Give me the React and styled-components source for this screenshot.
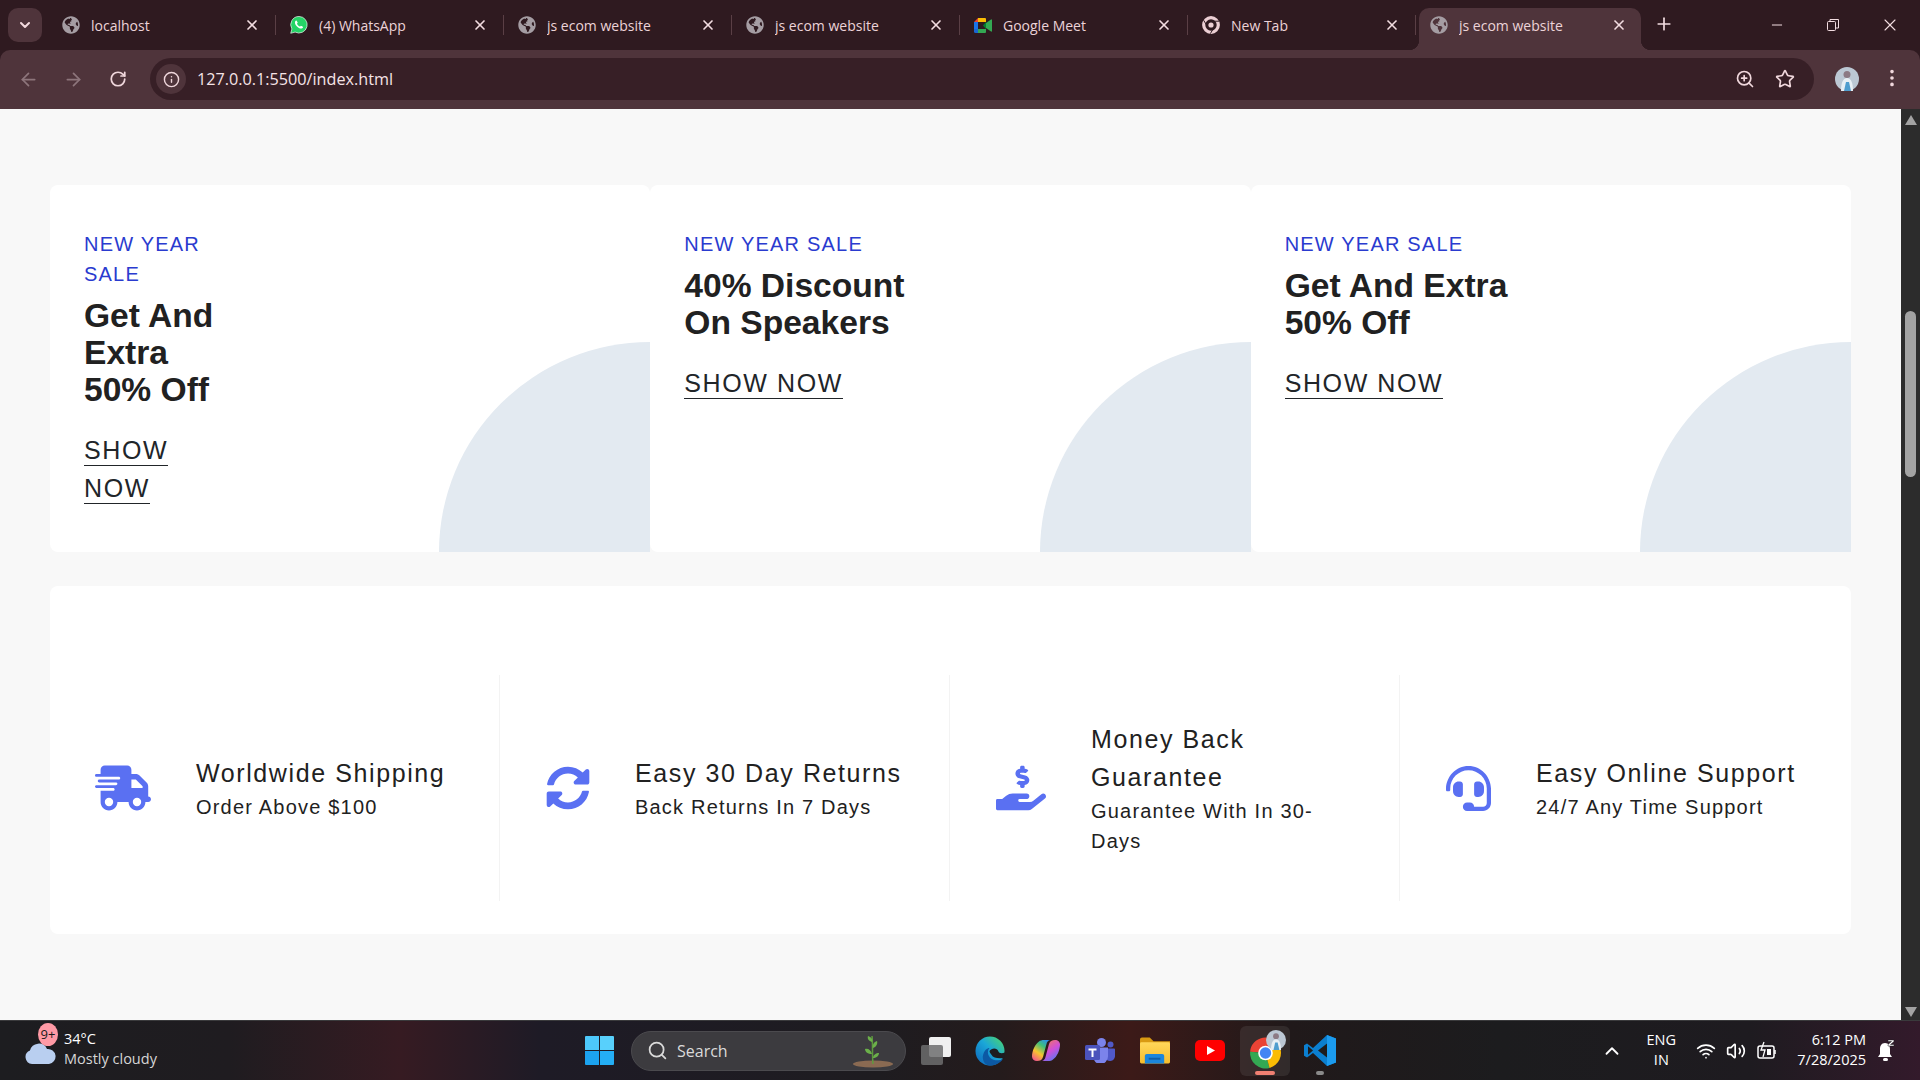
import styled, { createGlobalStyle } from "styled-components";
import {
  ArrowLeft,
  ArrowRight,
  ChevronDown,
  ChevronUp,
  EllipsisVertical,
  Info,
  Minus,
  Plus,
  RotateCw,
  Search,
  Star,
  Volume2,
  Wifi,
  X,
  ZoomIn,
} from "lucide-react";
import {
  FaGlobeAmericas,
  FaHandHoldingUsd,
  FaHeadset,
  FaSyncAlt,
} from "react-icons/fa";
import { FaTruckFast } from "react-icons/fa6";

const GlobalStyle = createGlobalStyle`
  * { box-sizing: border-box; }
  html, body { margin: 0; height: 100%; overflow: hidden; background: #f8f8f8; }
  body { font-family: "Liberation Sans", Arial, sans-serif; }
`;

const Screen = styled.div`
  width: 1920px;
  height: 1080px;
  display: flex;
  flex-direction: column;
  overflow: hidden;
  background: #2f1a20;
`;

/* browser top */
const TabStrip = styled.div`
  height: 50px;
  display: flex;
  align-items: flex-end;
  padding-left: 8px;
  font-family: "Open Sans", sans-serif;
`;

const TabMenu = styled.div`
  width: 34px;
  height: 34px;
  margin: 0 6px 8px 0;
  border-radius: 10px;
  background: #4f343b;
  color: #f3d9de;
  display: flex;
  align-items: center;
  justify-content: center;
`;

const Tab = styled.div`
  position: relative;
  width: 228px;
  height: 34px;
  margin-bottom: 8px;
  padding: 0 16px 0 14px;
  display: flex;
  align-items: center;
  gap: 11px;
  color: #ecd3d8;
  font-size: 14px;
  white-space: nowrap;

  &::after {
    content: "";
    position: absolute;
    right: 0;
    top: 7px;
    width: 1px;
    height: 20px;
    background: #5a3f45;
  }
`;

const ActiveTab = styled(Tab)`
  width: 222px;
  height: 42px;
  margin: 0 0 0 3px;
  padding: 0 14px 8px 11px;
  border-radius: 10px 10px 0 0;
  background: #4f343b;

  &::before,
  &::after {
    content: "";
    position: absolute;
    top: auto;
    bottom: 0;
    width: 10px;
    height: 10px;
  }
  &::before {
    left: -10px;
    right: auto;
    background: radial-gradient(circle at 0 0, transparent 10px, #4f343b 10.5px);
  }
  &::after {
    right: -10px;
    background: radial-gradient(circle at 100% 0, transparent 10px, #4f343b 10.5px);
  }
`;

const TabLabel = styled.span`
  flex: 1;
  overflow: hidden;
`;

const TabClose = styled(X)`
  color: #f3dde1;
  flex-shrink: 0;
`;

const Favicon = styled.span`
  width: 18px;
  height: 18px;
  flex-shrink: 0;
  display: flex;
  align-items: center;
  justify-content: center;
  color: ${(p) => p.$color || "#a59da3"};
`;

const NewTab = styled(Plus)`
  color: #f3dde1;
  margin: 0 0 16px 13px;
`;

const WindowButtons = styled.div`
  margin-left: auto;
  width: 171px;
  height: 50px;
  padding: 0 20px;
  display: flex;
  align-items: center;
  justify-content: space-between;
  color: #f3dde1;
`;

const Toolbar = styled.div`
  height: 59px;
  background: #4f343b;
  border-radius: 10px 10px 0 0;
  display: flex;
  align-items: flex-start;
  padding: 8px 0 0 16px;
`;

const NavButton = styled.span`
  width: 24px;
  height: 42px;
  margin-right: 21px;
  display: flex;
  align-items: center;
  justify-content: center;
  color: ${(p) => (p.$dim ? "#8d757b" : "#f0d7dc")};
`;

const Omnibox = styled.div`
  width: 1664px;
  height: 42px;
  margin-left: -1px;
  border-radius: 21px;
  background: #371f26;
  display: flex;
  align-items: center;
  padding: 0 19px 0 6px;
`;

const InfoChip = styled.span`
  width: 30px;
  height: 30px;
  border-radius: 50%;
  background: #4f343b;
  color: #f0d7dc;
  display: flex;
  align-items: center;
  justify-content: center;
  margin-right: 11px;
`;

const Url = styled.span`
  font-family: "Open Sans", sans-serif;
  font-size: 16.2px;
  color: #f5e3e6;
  flex: 1;
`;

const OmniIcons = styled.div`
  display: flex;
  align-items: center;
  gap: 20px;
  color: #f0d7dc;
`;

const Avatar = styled.span`
  margin: 9px 0 0 21px;
  display: flex;
`;

const ToolbarMenu = styled(EllipsisVertical)`
  margin: 9px 0 0 22px;
  color: #f0d7dc;
`;

/* page */
const Viewport = styled.div`
  flex: 1;
  min-height: 0;
  display: flex;
  background: #f8f8f8;
`;

const Page = styled.main`
  flex: 1;
  padding: 76px 50px 0;
`;

const BannerRow = styled.section`
  display: grid;
  grid-template-columns: repeat(3, 1fr);
  margin-bottom: 34px;
`;

const Banner = styled.article`
  position: relative;
  height: 367px;
  padding: 44px 34px;
  background: #fff;
  border-radius: 8px;
`;

const BannerText = styled.div`
  width: ${(p) => (p.$narrow ? "150px" : "auto")};
`;

const SaleLabel = styled.p`
  margin: 0 0 8px;
  font-size: 20px;
  line-height: 30px;
  letter-spacing: 1.2px;
  color: #2a3bcf;
`;

const BannerTitle = styled.h2`
  margin: 0 0 23px;
  font-size: 33.6px;
  line-height: 37px;
  font-weight: 700;
  color: #212121;
`;

const ShowNow = styled.a`
  font-size: 25px;
  line-height: 38px;
  letter-spacing: 1.6px;
  color: #212529;
  padding-bottom: 1px;
  border-bottom: 1px solid #212529;
`;

const Quarter = styled.div`
  position: absolute;
  right: 0;
  bottom: 0;
  width: 211px;
  height: 210px;
  background: #e3eaf1;
  border-top-left-radius: 100%;
`;

const FeatureCard = styled.section`
  display: grid;
  grid-template-columns: repeat(4, 450px);
  padding: 89px 0 33px;
  background: #fff;
  border-radius: 8px;
`;

const Feature = styled.div`
  display: flex;
  align-items: center;
  gap: 45px;
  padding: 45px 45px 45px ${(p) => (p.$first ? "45px" : "46px")};
  border-right: 1px solid #f3f3f3;

  &:last-child {
    border-right: none;
    padding-right: 0;
  }
`;

const FeatureIcon = styled.span`
  flex-shrink: 0;
  display: flex;
  color: #5a70f2;
`;

const FeatureTitle = styled.h3`
  margin: 0;
  font-size: 25px;
  line-height: 38px;
  font-weight: 400;
  letter-spacing: 1.6px;
  color: #212121;
`;

const FeatureText = styled.p`
  margin: 0;
  font-size: 20px;
  line-height: 30px;
  letter-spacing: 1.2px;
  color: #212121;
`;

const Scrollbar = styled.div`
  width: 19px;
  background: #2c2c2c;
  display: flex;
  flex-direction: column;
  align-items: center;
  padding-top: 6px;
`;

const ScrollArrow = styled.span`
  width: 0;
  height: 0;
  border-left: 6.5px solid transparent;
  border-right: 6.5px solid transparent;
  border-bottom: ${(p) => (p.$down ? "none" : "10px solid #a3a3a3")};
  border-top: ${(p) => (p.$down ? "10px solid #a3a3a3" : "none")};
  margin-top: ${(p) => (p.$down ? "auto" : "0")};
  margin-bottom: ${(p) => (p.$down ? "3px" : "0")};
`;

const ScrollThumb = styled.span`
  width: 11px;
  height: 166px;
  margin-top: 186px;
  border-radius: 6px;
  background: #a3a3a3;
`;

/* windows taskbar */
const Taskbar = styled.footer`
  height: 60px;
  flex-shrink: 0;
  display: flex;
  align-items: center;
  border-top: 1px solid #3a3a3c;
  color: #fff;
  font-family: "Open Sans", sans-serif;
  background: linear-gradient(
    90deg,
    #1d1d20 0,
    #1f1c20 230px,
    #361b22 400px,
    #1e1b26 540px,
    #1e1c20 880px,
    #241b1c 1000px,
    #3c1a18 1130px,
    #20191a 1290px,
    #1c1c1e 1500px,
    #1e1b20 1750px,
    #331a2b 1920px
  );
`;

const Weather = styled.div`
  position: relative;
  width: 585px;
  flex-shrink: 0;
  padding: 0 0 3px 64px;
`;

const WeatherLine = styled.div`
  font-size: 14.5px;
  line-height: 20px;
  color: ${(p) => (p.$dim ? "#d6d6d6" : "#fff")};
`;

const WeatherBadge = styled.span`
  position: absolute;
  left: 38px;
  top: -6px;
  width: 20px;
  height: 23px;
  border-radius: 50%;
  background: #ff9aa5;
  color: #1a1a1a;
  font-size: 13px;
  line-height: 23px;
  text-align: center;
`;

const WeatherCloud = styled.svg`
  position: absolute;
  left: 24px;
  top: 13px;
`;

const WinLogo = styled.svg`
  flex-shrink: 0;
  margin-right: 17px;
`;

const SearchPill = styled.div`
  width: 275px;
  height: 40px;
  flex-shrink: 0;
  margin-right: 15px;
  padding: 0 10px 0 15px;
  display: flex;
  align-items: center;
  gap: 9px;
  border-radius: 20px;
  background: #3c3b3f;
  border: 1px solid #4b4a4e;
  color: #dadada;
  font-size: 16px;
`;

const SearchLabel = styled.span`
  flex: 1;
`;

const AppIcon = styled.span`
  width: ${(p) => p.$w || 30}px;
  height: 50px;
  margin-right: ${(p) => p.$gap || 25}px;
  flex-shrink: 0;
  position: relative;
  display: flex;
  align-items: center;
  justify-content: center;
  border-radius: 6px;
  background: ${(p) => (p.$open ? "rgba(255, 255, 255, 0.08)" : "transparent")};
`;

const RunDot = styled.span`
  position: absolute;
  left: 50%;
  bottom: 1px;
  width: ${(p) => (p.$active ? "20px" : "8px")};
  height: 4px;
  margin-left: ${(p) => (p.$active ? "-10px" : "-4px")};
  border-radius: 2px;
  background: ${(p) => (p.$active ? "#f08072" : "#8a8a8a")};
`;

const Tray = styled.div`
  margin-left: auto;
  padding-right: 25px;
  display: flex;
  align-items: center;
`;

const TrayLang = styled.div`
  width: 30px;
  margin: 0 20px 2px 23px;
  font-size: 14.5px;
  line-height: 20px;
  text-align: center;
`;

const TrayIcons = styled.div`
  display: flex;
  align-items: center;
  gap: 10px;
  margin-right: 21px;
`;

const Clock = styled.div`
  font-size: 14.5px;
  line-height: 20px;
  text-align: right;
  margin: 0 11px 2px 0;
`;

const tabs = [
  { title: "localhost" },
  { title: "(4) WhatsApp", icon: <WhatsappIcon /> },
  { title: "js ecom website" },
  { title: "js ecom website" },
  { title: "Google Meet", icon: <MeetIcon /> },
  { title: "New Tab", icon: <ChromeMono />, color: "#eccfd4" },
];

const features = [
  { title: "Worldwide Shipping", text: "Order Above $100", icon: <FaTruckFast size={56} /> },
  { title: "Easy 30 Day Returns", text: "Back Returns In 7 Days", icon: <FaSyncAlt size={44} /> },
  { title: "Money Back Guarantee", text: "Guarantee With In 30-Days", icon: <FaHandHoldingUsd size={50} /> },
  { title: "Easy Online Support", text: "24/7 Any Time Support", icon: <FaHeadset size={45} /> },
];

const banners = [
  { title: ["Get And Extra", "50% Off"], narrow: true },
  { title: ["40% Discount", "On Speakers"] },
  { title: ["Get And Extra", "50% Off"] },
];

function WhatsappIcon() {
  return (
    <svg width="20" height="20" viewBox="0 0 20 20">
      <path
        d="M10 .5a9.2 9.2 0 0 0-7.900 13.900L.8 19.200l4.900-1.300A9.200 9.200 0 1 0 10 .5z"
        fill="#25d366"
        stroke="#fff"
        strokeWidth="0.7"
      />
      <path
        d="M7 5c-.5 0-1 .3-1.300 1-.6 1.500 0 3.500 1.800 5.400 2 2 4 3 5.500 2.500.8-.3 1.400-1 1.500-1.800 0-.3-2-1.400-2.400-1.400-.3 0-.8 1-1.100 1.100-1-.3-3-2.200-3.300-3.300 0-.3.9-.7.9-1.100C8.400 7 7.500 5 7 5z"
        fill="#fff"
      />
    </svg>
  );
}

function MeetIcon() {
  return (
    <svg width="18" height="15" viewBox="0 0 18 15">
      <path d="M4 0h7a1 1 0 0 1 1 1v3H4z" fill="#fbbc04" />
      <path d="M0 4l4-4v4z" fill="#ea4335" />
      <path d="M0 4h4v7H0z" fill="#1a73e8" />
      <path d="M0 11h4v4H1.500A1.500 1.500 0 0 1 0 13.500z" fill="#1967d2" />
      <path d="M4 11h8v3a1 1 0 0 1-1 1H4z" fill="#34a853" />
      <path d="M12 4v7l-3-3.500z" fill="#00832d" />
      <path d="M12 5l5-3.500a.6.6 0 0 1 1 .5v11a.6.6 0 0 1-1 .5L12 10z" fill="#34a853" />
    </svg>
  );
}

function ChromeMono() {
  return (
    <svg width="18" height="18" viewBox="0 0 18 18" fill="none">
      <circle cx="9" cy="9" r="7.300" stroke="currentColor" strokeWidth="3.200" />
      <circle cx="9" cy="9" r="2.600" fill="currentColor" />
      <path d="M9 5.200h8M5.700 11L1.700 4.300M12.300 11L8.300 17.700" stroke="#2f1a20" strokeWidth="1" />
    </svg>
  );
}

function Portrait({ size }) {
  return (
    <svg width={size} height={size} viewBox="0 0 24 24">
      <circle cx="12" cy="12" r="12" fill="#bcc8d4" />
      <circle cx="12" cy="7.500" r="3.500" fill="#8c7a84" />
      <path d="M6 24c0-8 2-13 6-13s6 5 6 13z" fill="#e8eff4" />
      <path d="M9 24l2-9h3l2 9z" fill="#4f9dce" />
    </svg>
  );
}

function ChromeColor() {
  return (
    <svg width="40" height="40" viewBox="0 0 40 40" overflow="visible">
      <path d="M20.500 22L34.550 15.450A15.500 15.500 0 0 0 5.060 20.650Z" fill="#ea4335" />
      <path d="M20.500 22L5.060 20.650A15.500 15.500 0 0 0 24.510 36.970Z" fill="#34a853" />
      <path d="M20.500 22L24.510 36.970A15.500 15.500 0 0 0 34.550 15.450Z" fill="#fbbc04" />
      <circle cx="20.500" cy="22" r="7.300" fill="#fff" />
      <circle cx="20.500" cy="22" r="5.700" fill="#4285f4" />
      <g transform="translate(21 -1)">
        <Portrait size={20} />
      </g>
    </svg>
  );
}

function EdgeIcon() {
  return (
    <svg width="31" height="30" viewBox="0 0 31 30">
      <defs>
        <linearGradient id="edgeA" x1="0.9" y1="0.1" x2="0.1" y2="0.9">
          <stop offset="0" stopColor="#45d07a" />
          <stop offset="0.45" stopColor="#1ba7d8" />
          <stop offset="1" stopColor="#0f6fc0" />
        </linearGradient>
      </defs>
      <circle cx="15.500" cy="15" r="15" fill="url(#edgeA)" />
      <path d="M15 15c2-3.500 8-3.500 9 0 .8 2.500 3.500 3 7 1.500V22c-5 1-12 1-14-3-1-1.500-2-2.500-2-4z" fill="#1d1c20" />
      <path d="M8 21c1-7 5-9 7-9-3 3-2 10 4 12 3 1 7 1 10-1-3 5-9 7-14 7-4 0-7-4-7-9z" fill="#0c59a4" />
    </svg>
  );
}

function CopilotIcon() {
  return (
    <svg width="28" height="21" viewBox="0 0 28 21">
      <defs>
        <linearGradient id="copA" x1="0.2" y1="1" x2="0.8" y2="0">
          <stop offset="0" stopColor="#f2598a" />
          <stop offset="0.35" stopColor="#f7c52e" />
          <stop offset="0.7" stopColor="#3fc07a" />
          <stop offset="1" stopColor="#2c8fe8" />
        </linearGradient>
        <linearGradient id="copB" x1="0.8" y1="1" x2="0.2" y2="0">
          <stop offset="0" stopColor="#f2785a" />
          <stop offset="0.5" stopColor="#d04fd8" />
          <stop offset="1" stopColor="#4f7cf2" />
        </linearGradient>
      </defs>
      <path d="M7 1.500C8 .5 10 0 12 0h6c-2 .5-3 2-3.500 4L11 17c-1 3-3 4-6 4-3 0-5-2-5-4.500C0 11 3 4 7 1.500z" fill="url(#copA)" />
      <path d="M7 1.500C8 .5 10 0 12 0h6c-2 .5-3 2-3.500 4L11 17c-1 3-3 4-6 4-3 0-5-2-5-4.500C0 11 3 4 7 1.500z" fill="url(#copB)" transform="rotate(180 14 10.500)" />
    </svg>
  );
}

function TeamsIcon() {
  return (
    <svg width="30" height="25" viewBox="0 0 30 25">
      <circle cx="16.500" cy="4.500" r="4.500" fill="#7b83eb" />
      <circle cx="25.500" cy="6.500" r="3" fill="#5059c9" />
      <path d="M20 10.500h9a1 1 0 0 1 1 1v6a5 5 0 0 1-10 1z" fill="#5059c9" />
      <path d="M8 9.500h15v9a6.500 6.500 0 0 1-15 0z" fill="#7b83eb" />
      <rect x="0" y="7" width="15" height="15" rx="1.500" fill="#4b53bc" />
      <path d="M3.500 10.500h8v2h-3v6.500h-2v-6.500h-3z" fill="#fff" />
    </svg>
  );
}

function FilesIcon() {
  return (
    <svg width="31" height="27" viewBox="0 0 31 27">
      <defs>
        <linearGradient id="fileA" x1="0" y1="0" x2="0" y2="1">
          <stop offset="0" stopColor="#ffd75a" />
          <stop offset="1" stopColor="#f6bd2e" />
        </linearGradient>
      </defs>
      <path d="M0 2a2 2 0 0 1 2-2h8l4 4h17v4H0z" fill="#d99a12" />
      <rect x="0" y="5" width="31" height="22" rx="1.500" fill="url(#fileA)" />
      <path d="M5 19a2 2 0 0 1 2-2h16a2 2 0 0 1 2 2v8H5z" fill="#1b86dc" />
      <rect x="9" y="21" width="12" height="2" fill="#0f5fa8" />
    </svg>
  );
}

function YoutubeIcon() {
  return (
    <svg width="30" height="21" viewBox="0 0 30 21">
      <rect x="0" y="0" width="30" height="21" rx="5" fill="#f00" />
      <path d="M12 6l8 4.500-8 4.500z" fill="#fff" />
    </svg>
  );
}

function VscodeIcon() {
  return (
    <svg width="32" height="31" viewBox="0 0 32 36" preserveAspectRatio="none">
      <path d="M23 0l9 4v28l-9 4-14-15-6 5-3-2v-12l3-2 6 5z" fill="#0b7fd0" />
      <path d="M23 0l9 4v28l-9 4z" fill="#1b9bef" />
      <path d="M23 10l-9 8 9 8z" fill="#1d1c1e" />
      <path d="M4 13l5 5-5 5z" fill="#1d1c1e" />
    </svg>
  );
}

function BatteryIcon() {
  return (
    <svg width="20" height="24" viewBox="0 0 20 24" fill="none" stroke="#fff" strokeWidth="1.500">
      <rect x="2" y="7" width="16" height="12" rx="2" />
      <path d="M19 11v4" />
      <path d="M8 3l-3 8h4l-2 7" strokeWidth="1.300" />
      <rect x="11" y="10" width="4" height="6" fill="#fff" stroke="none" />
    </svg>
  );
}

function BellIcon() {
  return (
    <svg width="18" height="24" viewBox="0 0 18 24" fill="#fff">
      <path d="M8 4c3.500 0 5 3 5 6v5l2 3H1l2-3v-5c0-3 1.500-6 5-6z" />
      <rect x="6" y="19" width="5" height="3" rx="1.500" />
      <path d="M11 1h6v1.500l-3.500 3H17V7h-6V5.500L14.500 2.500H11z" stroke="#1f1b20" strokeWidth="0.500" />
    </svg>
  );
}

export default function App() {
  return (
    <Screen>
      <GlobalStyle />
      <TabStrip>
        <TabMenu>
          <ChevronDown size={16} strokeWidth={3} />
        </TabMenu>
        {tabs.map((tab, i) => (
          <Tab key={i}>
            <Favicon $color={tab.color}>{tab.icon || <FaGlobeAmericas size={18} />}</Favicon>
            <TabLabel>{tab.title}</TabLabel>
            <TabClose size={16} strokeWidth={2.5} />
          </Tab>
        ))}
        <ActiveTab>
          <Favicon>
            <FaGlobeAmericas size={18} />
          </Favicon>
          <TabLabel>js ecom website</TabLabel>
          <TabClose size={16} strokeWidth={2.5} />
        </ActiveTab>
        <NewTab size={20} />
        <WindowButtons>
          <Minus size={16} strokeWidth={1.5} />
          <svg width="14" height="14" viewBox="0 0 14 14" fill="none" stroke="currentColor">
            <rect x="1.500" y="3.500" width="8" height="9" rx="1" />
            <path d="M4 3V1.500h8.500V10H10" />
          </svg>
          <X size={20} strokeWidth={1.3} />
        </WindowButtons>
      </TabStrip>

      <Toolbar>
        <NavButton $dim>
          <ArrowLeft size={21} />
        </NavButton>
        <NavButton $dim>
          <ArrowRight size={21} />
        </NavButton>
        <NavButton>
          <RotateCw size={18} strokeWidth={2.3} />
        </NavButton>
        <Omnibox>
          <InfoChip>
            <Info size={17} />
          </InfoChip>
          <Url>127.0.0.1:5500/index.html</Url>
          <OmniIcons>
            <ZoomIn size={20} />
            <Star size={20} />
          </OmniIcons>
        </Omnibox>
        <Avatar>
          <Portrait size={24} />
        </Avatar>
        <ToolbarMenu size={22} />
      </Toolbar>

      <Viewport>
        <Page>
          <BannerRow>
            {banners.map((b, i) => (
              <Banner key={i}>
                <BannerText $narrow={b.narrow}>
                  <SaleLabel>NEW YEAR SALE</SaleLabel>
                  <BannerTitle>
                    {b.title[0]}
                    <br />
                    {b.title[1]}
                  </BannerTitle>
                  <ShowNow>SHOW NOW</ShowNow>
                </BannerText>
                <Quarter />
              </Banner>
            ))}
          </BannerRow>

          <FeatureCard>
            {features.map((f, i) => (
              <Feature key={i} $first={i === 0}>
                <FeatureIcon>{f.icon}</FeatureIcon>
                <div>
                  <FeatureTitle>{f.title}</FeatureTitle>
                  <FeatureText>{f.text}</FeatureText>
                </div>
              </Feature>
            ))}
          </FeatureCard>
        </Page>
        <Scrollbar>
          <ScrollArrow />
          <ScrollThumb />
          <ScrollArrow $down />
        </Scrollbar>
      </Viewport>

      <Taskbar>
        <Weather>
          <WeatherCloud width="32" height="22" viewBox="0 0 32 22">
            <path d="M8 22a7 7 0 0 1-2-13.500A9 9 0 0 1 23 7a7.500 7.500 0 0 1 2 15z" fill="#b9cff0" />
          </WeatherCloud>
          <WeatherBadge>9+</WeatherBadge>
          <WeatherLine>34°C</WeatherLine>
          <WeatherLine $dim>Mostly cloudy</WeatherLine>
        </Weather>
        <WinLogo width="29" height="29" viewBox="0 0 29 29">
          <path d="M0 1a1 1 0 0 1 1-1h13v14H0z" fill="#4dc8fb" />
          <path d="M15 0h13a1 1 0 0 1 1 1v13H15z" fill="#58d0fc" />
          <path d="M0 15h14v14H1a1 1 0 0 1-1-1z" fill="#1ca3f0" />
          <path d="M15 15h14v13a1 1 0 0 1-1 1H15z" fill="#24aef5" />
        </WinLogo>
        <SearchPill>
          <Search size={21} strokeWidth={2} />
          <SearchLabel>Search</SearchLabel>
          <svg width="44" height="34" viewBox="0 0 44 34">
            <ellipse cx="22" cy="30" rx="20" ry="3.500" fill="#8a6a52" />
            <path d="M22 30C21 20 22 10 21 2" stroke="#5d9a3e" strokeWidth="1.500" fill="none" />
            <path d="M21 8c-3-1-5-3-4-6 3 1 5 3 4 6zM22 14c3-1 5-4 4-7-3 1-5 4-4 7zM21 20c-4 0-7-2-7-5 3-1 6 1 7 5zM22 24c3 0 6-2 6-5-3 0-6 2-6 5z" fill="#6bb04a" />
          </svg>
        </SearchPill>
        <AppIcon $gap={24}>
          <svg width="30" height="28" viewBox="0 0 30 28">
            <rect x="8" y="0" width="22" height="20" rx="2" fill="#f0f0f0" />
            <rect x="0" y="8" width="22" height="20" rx="2" fill="#6d6d6f" fillOpacity="0.85" />
          </svg>
        </AppIcon>
        <AppIcon $gap={26}>
          <EdgeIcon />
        </AppIcon>
        <AppIcon $gap={24}>
          <CopilotIcon />
        </AppIcon>
        <AppIcon $gap={25}>
          <TeamsIcon />
        </AppIcon>
        <AppIcon $gap={25}>
          <FilesIcon />
        </AppIcon>
        <AppIcon $gap={15}>
          <YoutubeIcon />
        </AppIcon>
        <AppIcon $w={50} $gap={14} $open>
          <ChromeColor />
          <RunDot $active />
        </AppIcon>
        <AppIcon $w={32}>
          <VscodeIcon />
          <RunDot />
        </AppIcon>
        <Tray>
          <ChevronUp size={22} strokeWidth={2} />
          <TrayLang>
            ENG
            <br />
            IN
          </TrayLang>
          <TrayIcons>
            <Wifi size={20} />
            <Volume2 size={20} />
            <BatteryIcon />
          </TrayIcons>
          <Clock>
            6:12 PM
            <br />
            7/28/2025
          </Clock>
          <BellIcon />
        </Tray>
      </Taskbar>
    </Screen>
  );
}
